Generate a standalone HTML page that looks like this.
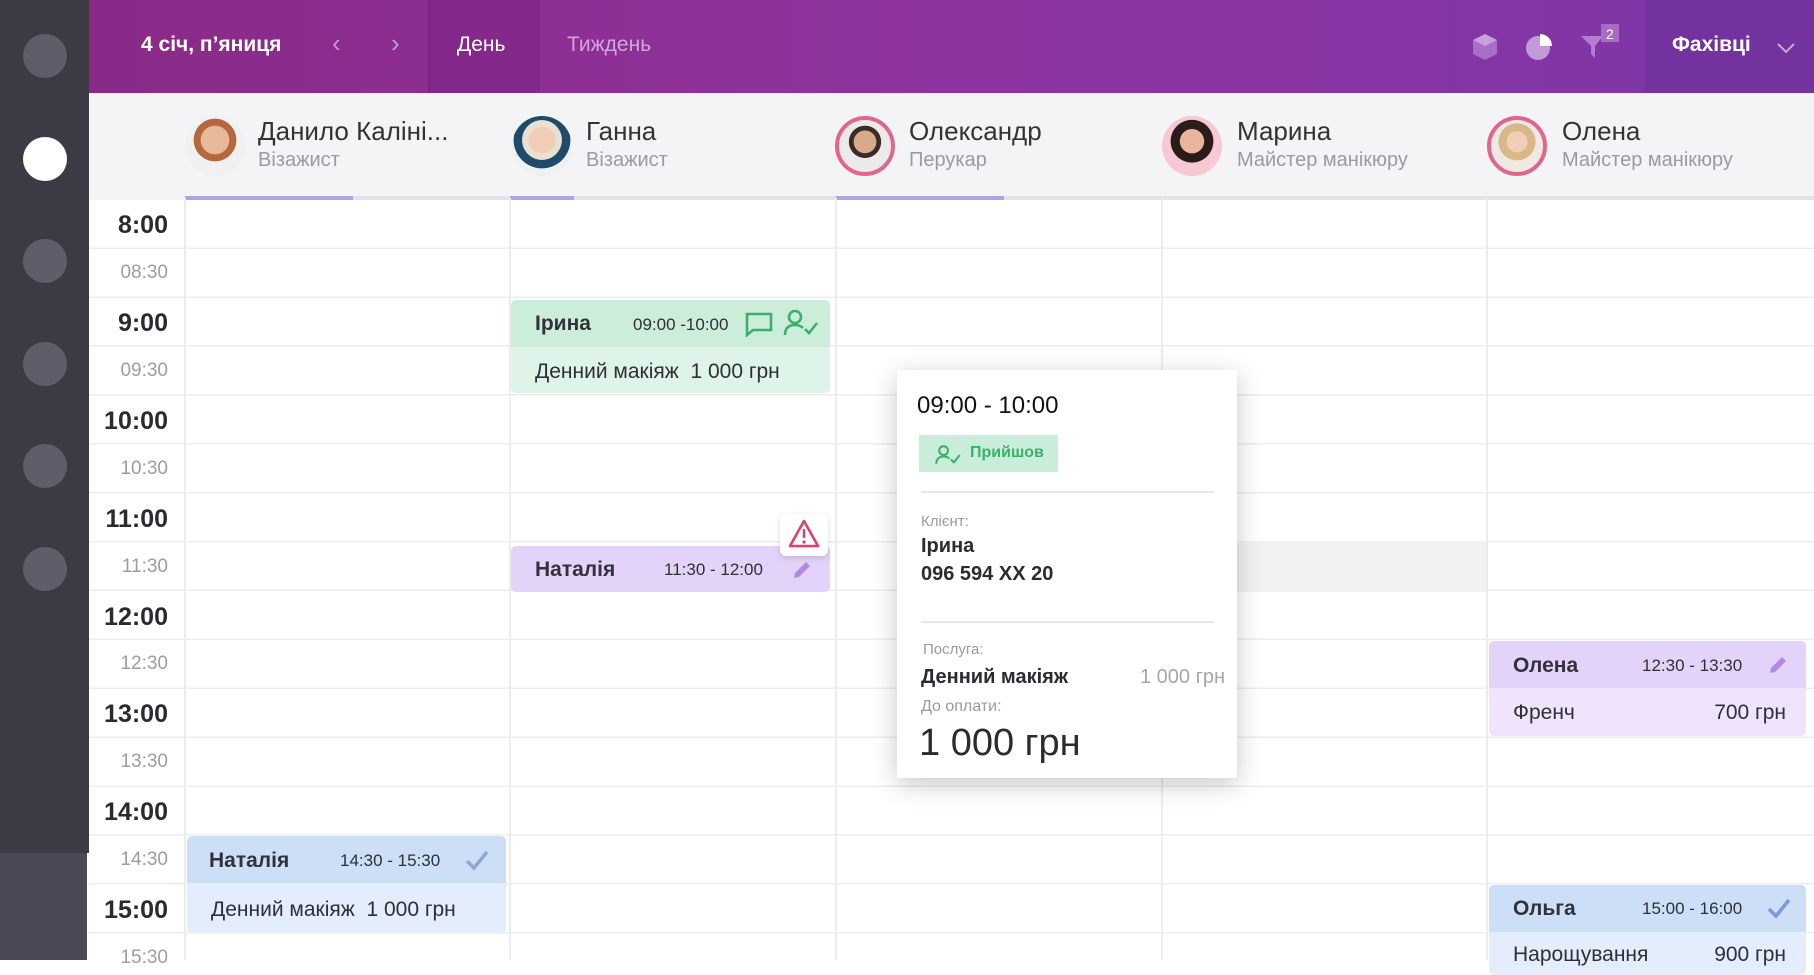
<!DOCTYPE html>
<html><head><meta charset="utf-8"><style>
*{margin:0;padding:0;box-sizing:border-box}
body{width:1814px;height:960px;overflow:hidden;position:relative;background:#fff;font-family:"Liberation Sans","DejaVu Sans",sans-serif;color:#2c2c34}
.a{position:absolute}
.side{left:0;top:0;width:89px;height:853px;background:#3c3a45}
.side2{left:0;top:853px;width:87px;height:107px;background:#4b4955}
.dot{position:absolute;left:23px;width:44px;height:44px;border-radius:50%;background:#5f5d69}
.hdr{left:89px;top:0;width:1725px;height:93px;background:linear-gradient(90deg,#8a2a87 0%,#8f33a0 50%,#7d37a8 100%)}
.ht{position:absolute;top:33px;font-size:21px;color:#fff}
.band{left:89px;top:93px;width:1725px;height:107px;background:#f4f4f7}
.av{position:absolute;top:23px;width:60px;height:60px;border-radius:50%;overflow:hidden}
.nm{position:absolute;top:23px;font-size:26px;color:#333}
.rl{position:absolute;top:56px;font-size:20px;color:#9a9aa2}
.grid{left:89px;top:200px;width:1725px;height:760px;background:repeating-linear-gradient(180deg,transparent 0,transparent 47.4px,#ececef 47.4px,#ececef 48.9px)}
.vl{position:absolute;top:198px;width:2px;height:762px;background:#ececef}
.tl{position:absolute;width:80px;left:88px;text-align:right}
.hb{font-size:25px;font-weight:bold;color:#2a2a30}
.hh{font-size:19px;color:#9c9ca4}
.ev{position:absolute;border-radius:5px;overflow:hidden}
.et{position:absolute;left:0;right:0;top:0;height:47px}
.n{position:absolute;font-size:21px;font-weight:bold;color:#33323a}
.t{position:absolute;font-size:17px;color:#2f2f36}
.s{position:absolute;font-size:21px;color:#2f2f36}
</style></head><body>
<div class="a side">
<div class="dot" style="top:34px"></div>
<div class="dot" style="top:137px;background:#fff"></div>
<div class="dot" style="top:239px"></div>
<div class="dot" style="top:342px"></div>
<div class="dot" style="top:444px"></div>
<div class="dot" style="top:547px"></div>
</div>
<div class="a side2"></div>
<div class="a hdr">
<div class="ht" style="left:52px;font-weight:bold">4 січ, п’яниця</div>
<div class="ht" style="left:243px;color:#c59ad0;font-size:26px;top:28px">&#x2039;</div>
<div class="ht" style="left:302px;color:#c59ad0;font-size:26px;top:28px">&#x203A;</div>
<div style="position:absolute;left:339px;top:0;width:2px;height:93px;background:#7c2279"></div>
<div style="position:absolute;left:341px;top:0;width:110px;height:93px;background:#84298b"></div>
<div class="ht" style="left:368px">День</div>
<div class="ht" style="left:478px;color:#d2a6da">Тиждень</div>
<svg style="position:absolute;left:1382px;top:32px" width="28" height="30" viewBox="0 0 28 30"><path d="M14 2L26 8V22L14 28L2 22V8Z" fill="#b07dd0" opacity=".8"/><path d="M14 2L26 8L14 14L2 8Z" fill="#c7a0dd"/></svg>
<svg style="position:absolute;left:1436px;top:33px" width="28" height="28" viewBox="0 0 28 28"><circle cx="13" cy="15" r="12" fill="#c29ad8"/><path d="M15 1A12 12 0 0 1 27 13H15Z" fill="#fff"/></svg>
<svg style="position:absolute;left:1490px;top:24px" width="40" height="40" viewBox="0 0 40 40"><path d="M2 12H24L16 22V34L12 30V22Z" fill="#b07dd0"/><rect x="22" y="0" width="18" height="18" fill="#a86bc8"/><text x="27" y="15" font-size="14" fill="#fff" font-family="Liberation Sans">2</text></svg>
<div style="position:absolute;left:1556px;top:0;width:169px;height:93px;background:#74329e"></div>
<div class="ht" style="left:1583px;font-weight:bold">Фахівці</div>
<svg style="position:absolute;left:1687px;top:42px" width="20" height="12" viewBox="0 0 20 12"><path d="M2 2L10 10L18 2" stroke="#c9a6dc" stroke-width="2" fill="none"/></svg>
</div>
<div class="a band">
<div class="av" style="left:96px;background:radial-gradient(circle at 50% 40%,#e8b89a 0 30%,#b5683e 31% 45%,#eef0f2 46%)"></div>
<div class="nm" style="left:169px">Данило Каліні...</div><div class="rl" style="left:169px">Візажист</div>
<div class="av" style="left:423px;background:radial-gradient(circle at 50% 40%,#f0cdb4 0 28%,#e8e0d0 29% 42%,#1f4a6a 43% 60%,#eef0f2 61%)"></div>
<div class="nm" style="left:497px">Ганна</div><div class="rl" style="left:497px">Візажист</div>
<div class="av" style="left:746px;border:4px solid #e0668e;background:radial-gradient(circle at 50% 42%,#d9a98c 0 28%,#3b2c26 29% 40%,#eaeaea 41%)"></div>
<div class="nm" style="left:820px">Олександр</div><div class="rl" style="left:820px">Перукар</div>
<div class="av" style="left:1073px;background:radial-gradient(circle at 50% 42%,#e8b49c 0 26%,#2a1c18 27% 46%,#f6c9d4 47%)"></div>
<div class="nm" style="left:1148px">Марина</div><div class="rl" style="left:1148px">Майстер манікюру</div>
<div class="av" style="left:1398px;border:4px solid #e0668e;background:radial-gradient(circle at 50% 42%,#f1cfb6 0 26%,#d8b788 27% 46%,#f0e8e4 47%)"></div>
<div class="nm" style="left:1473px">Олена</div><div class="rl" style="left:1473px">Майстер манікюру</div>
</div>
<div class="a" style="left:185px;top:196px;width:1629px;height:4px;background:#e3e3e6"></div>
<div class="a" style="left:185px;top:196px;width:168px;height:4px;background:#a9a6e8"></div>
<div class="a" style="left:510px;top:196px;width:64px;height:4px;background:#a9a6e8"></div>
<div class="a" style="left:836px;top:196px;width:168px;height:4px;background:#a9a6e8"></div>
<div class="a grid"></div>
<div class="a" style="left:1162px;top:541px;width:325px;height:51px;background:#f2f2f4"></div>
<div class="vl" style="left:184px"></div><div class="vl" style="left:509px"></div><div class="vl" style="left:835px"></div><div class="vl" style="left:1161px"></div><div class="vl" style="left:1486px"></div>
<div class="tl hb" style="top:211px">8:00</div>
<div class="tl hh" style="top:262px">08:30</div>
<div class="tl hb" style="top:309px">9:00</div>
<div class="tl hh" style="top:360px">09:30</div>
<div class="tl hb" style="top:407px">10:00</div>
<div class="tl hh" style="top:458px">10:30</div>
<div class="tl hb" style="top:505px">11:00</div>
<div class="tl hh" style="top:556px">11:30</div>
<div class="tl hb" style="top:603px">12:00</div>
<div class="tl hh" style="top:653px">12:30</div>
<div class="tl hb" style="top:700px">13:00</div>
<div class="tl hh" style="top:751px">13:30</div>
<div class="tl hb" style="top:798px">14:00</div>
<div class="tl hh" style="top:849px">14:30</div>
<div class="tl hb" style="top:896px">15:00</div>
<div class="tl hh" style="top:947px">15:30</div>

<div class="ev" style="left:511px;top:300px;width:319px;height:93px;background:#dff4e8">
<div class="et" style="background:#ccedd9"></div>
<div class="n" style="left:24px;top:12px">Ірина</div>
<div class="t" style="left:122px;top:15px">09:00 -10:00</div>
<svg style="position:absolute;left:233px;top:11px" width="30" height="26" viewBox="0 0 30 26"><path d="M3 3H27V19H9L3 24Z" fill="none" stroke="#3bb06c" stroke-width="2.6"/></svg>
<svg style="position:absolute;left:272px;top:8px" width="36" height="30" viewBox="0 0 36 30"><circle cx="12" cy="9" r="6" fill="none" stroke="#3bb06c" stroke-width="2.6"/><path d="M2 27C2 20 6 17 12 17C16 17 18 18 20 20" fill="none" stroke="#3bb06c" stroke-width="2.6"/><path d="M22 21L26 25L34 15" fill="none" stroke="#3bb06c" stroke-width="2.6"/></svg>
<div class="s" style="left:24px;top:60px">Денний макіяж&nbsp; 1 000 грн</div>
</div>

<div class="ev" style="left:511px;top:546px;width:319px;height:46px;background:#e3d3f8">
<div class="n" style="left:24px;top:12px">Наталія</div>
<div class="t" style="left:153px;top:14px">11:30 - 12:00</div>
<svg style="position:absolute;left:280px;top:13px" width="22" height="22" viewBox="0 0 22 22"><path d="M3 19L4 14L15 3L19 7L8 18Z" fill="#b48ae0"/></svg>
</div>
<div class="a" style="left:780px;top:514px;width:48px;height:42px;background:#fff;border-radius:6px;box-shadow:0 2px 6px rgba(0,0,0,.15)"></div>
<svg class="a" style="left:787px;top:518px" width="34" height="32" viewBox="0 0 34 32"><path d="M17 3L31 28H3Z" fill="none" stroke="#e0406a" stroke-width="2.6" stroke-linejoin="round"/><path d="M17 11V20" stroke="#e0406a" stroke-width="2.6"/><circle cx="17" cy="24" r="1.6" fill="#e0406a"/></svg>

<div class="ev" style="left:187px;top:836px;width:319px;height:97px;background:#e3edfb">
<div class="et" style="background:#cddff7"></div>
<div class="n" style="left:22px;top:13px">Наталія</div>
<div class="t" style="left:153px;top:15px">14:30 - 15:30</div>
<svg style="position:absolute;left:277px;top:12px" width="26" height="24" viewBox="0 0 26 24"><path d="M3 13L10 20L23 4" fill="none" stroke="#8fa6d6" stroke-width="3.5"/></svg>
<div class="s" style="left:24px;top:62px">Денний макіяж&nbsp; 1 000 грн</div>
</div>

<div class="ev" style="left:1489px;top:641px;width:317px;height:95px;background:#efe4fb">
<div class="et" style="background:#e3d3f8"></div>
<div class="n" style="left:24px;top:13px">Олена</div>
<div class="t" style="left:153px;top:15px">12:30 - 13:30</div>
<svg style="position:absolute;left:278px;top:13px" width="22" height="22" viewBox="0 0 22 22"><path d="M3 19L4 14L15 3L19 7L8 18Z" fill="#b48ae0"/></svg>
<div class="s" style="left:24px;top:60px">Френч</div>
<div class="s" style="right:20px;top:60px">700 грн</div>
</div>

<div class="ev" style="left:1489px;top:885px;width:317px;height:90px;background:#e3edfb">
<div class="et" style="background:#cddff7"></div>
<div class="n" style="left:24px;top:12px">Ольга</div>
<div class="t" style="left:153px;top:14px">15:00 - 16:00</div>
<svg style="position:absolute;left:277px;top:11px" width="26" height="24" viewBox="0 0 26 24"><path d="M3 13L10 20L23 4" fill="none" stroke="#7f98d6" stroke-width="3.5"/></svg>
<div class="s" style="left:24px;top:58px">Нарощування</div>
<div class="s" style="right:20px;top:58px">900 грн</div>
</div>

<div class="a" style="left:897px;top:370px;width:340px;height:408px;background:#fff;box-shadow:0 6px 24px rgba(0,0,0,.22)">
<div class="a" style="left:20px;top:22px;font-size:24px;color:#111">09:00 - 10:00</div>
<div class="a" style="left:22px;top:65px;width:139px;height:37px;background:#c8eedb"></div>
<svg class="a" style="left:37px;top:74px" width="28" height="22" viewBox="0 0 36 30"><circle cx="12" cy="9" r="6" fill="none" stroke="#3bb06c" stroke-width="2.8"/><path d="M2 27C2 20 6 17 12 17C16 17 18 18 20 20" fill="none" stroke="#3bb06c" stroke-width="2.8"/><path d="M22 21L26 25L34 15" fill="none" stroke="#3bb06c" stroke-width="2.8"/></svg>
<div class="a" style="left:73px;top:74px;font-size:16px;font-weight:bold;color:#3bb06c">Прийшов</div>
<div class="a" style="left:24px;top:121px;width:293px;height:2px;background:#e8e8ea"></div>
<div class="a" style="left:24px;top:143px;font-size:15px;color:#9a9aa0">Клієнт:</div>
<div class="a" style="left:24px;top:165px;font-size:20px;font-weight:bold;color:#2b2b31">Ірина</div>
<div class="a" style="left:24px;top:193px;font-size:20px;font-weight:bold;color:#2b2b31">096 594 XX 20</div>
<div class="a" style="left:24px;top:251px;width:293px;height:2px;background:#e8e8ea"></div>
<div class="a" style="left:26px;top:271px;font-size:15px;color:#9a9aa0">Послуга:</div>
<div class="a" style="left:24px;top:296px;font-size:20px;font-weight:bold;color:#2b2b31">Денний макіяж</div>
<div class="a" style="left:243px;top:296px;font-size:20px;color:#a5a5aa">1 000 грн</div>
<div class="a" style="left:24px;top:328px;font-size:16px;color:#9a9aa0">До оплати:</div>
<div class="a" style="left:22px;top:352px;font-size:38px;color:#2b2b31">1 000 грн</div>
</div>
</body></html>
